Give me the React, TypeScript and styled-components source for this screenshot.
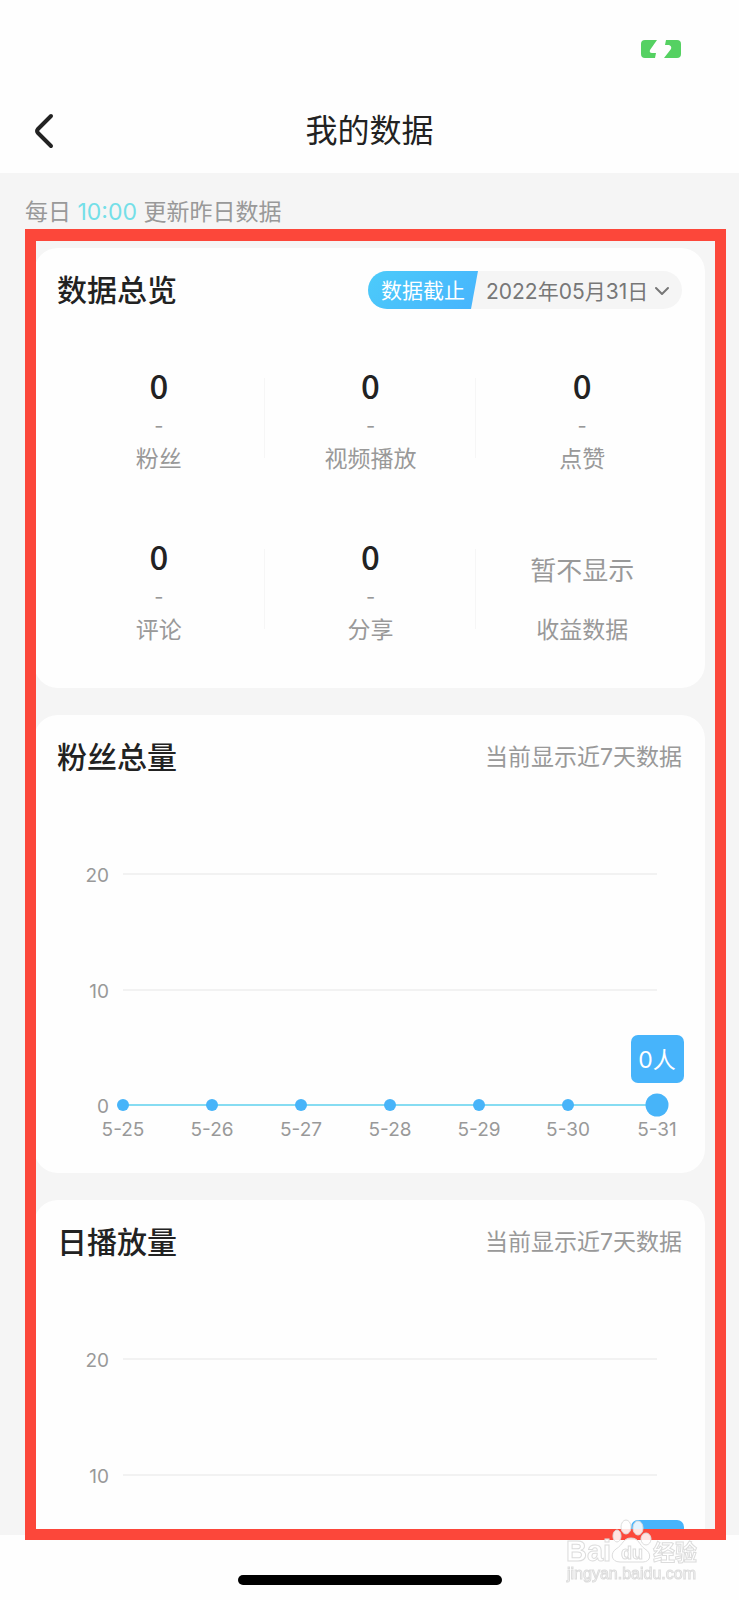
import React from "react";
import styled, { createGlobalStyle } from "styled-components";

const GlobalStyle = createGlobalStyle`
  * { box-sizing: border-box; }
  body { margin: 0; background: #fefefe; }
  body, button, select {
    font-family: Inter, "Noto Sans CJK SC", sans-serif;
  }
  h1, h2, p, dl, dd, dt { margin: 0; }
`;

const Screen = styled.div`
  position: relative;
  display: flex;
  flex-direction: column;
  height: 100vh;
  overflow: hidden;
`;

const StatusBar = styled.div`
  flex: none;
  display: flex;
  justify-content: flex-end;
  height: 88px;
  padding: 40px 58px 0 0;
`;

const NavBar = styled.header`
  flex: none;
  display: grid;
  grid-template-columns: 80px 1fr 80px;
  align-items: center;
  height: 85px;
`;

const BackButton = styled.button`
  display: flex;
  width: 80px;
  padding: 24px 0 24px 34px;
  border: 0;
  background: none;
`;

const PageTitle = styled.h1`
  font-size: 32px;
  line-height: 40px;
  font-weight: 400;
  text-align: center;
  color: #222;
`;

const Content = styled.main`
  flex: 1;
  min-height: 0;
  overflow-y: auto;
  scrollbar-width: none;
  padding: 0 34px;
  background: #f5f5f5;
`;

const Note = styled.p`
  margin: 0 -9px;
  padding: 24px 0 21px;
  font-size: 23px;
  line-height: 30px;
  color: #999;
`;

const NoteTime = styled.span`
  color: #74dfe8;
`;

const Card = styled.section`
  margin-bottom: 27px;
  border-radius: 24px;
  background: #fefefe;
`;

const CardHeader = styled.div`
  display: flex;
  align-items: center;
  justify-content: space-between;
  height: 84px;
  padding: 0 23px;
`;

const CardTitle = styled.h2`
  font-size: 30px;
  line-height: 40px;
  font-weight: 500;
  color: #222;
`;

const CardHint = styled.p`
  font-size: 23px;
  line-height: 30px;
  color: #999;
`;

const DatePill = styled.div`
  position: relative;
  display: flex;
  height: 38px;
  border-radius: 19px;
  overflow: hidden;
  background: #f5f5f5;
`;

const PillLabel = styled.label`
  padding: 0 13px;
  font-size: 21px;
  line-height: 40px;
  color: #fff;
  background: linear-gradient(135deg, #4ccbfa, #47b4fd);
  clip-path: polygon(0 0, 100% 0, calc(100% - 7px) 100%, 0 100%);
`;

const DateSelect = styled.select`
  appearance: none;
  padding: 2px 33px 0 8px;
  border: 0;
  background: none;
  font-size: 21px;
  color: #777;
`;

const PillChevron = styled.svg`
  position: absolute;
  right: 12px;
  top: 14px;
  pointer-events: none;
`;

const Metrics = styled.dl`
  display: grid;
  grid-template-columns: repeat(3, 1fr);
  padding: 0 17px 14px 19px;
`;

const Metric = styled.div<{ $divided: boolean }>`
  display: flex;
  flex-direction: column-reverse;
  justify-content: flex-end;
  height: 171px;
  padding-top: 36px;
  text-align: center;
  background: ${(p) =>
    p.$divided
      ? "linear-gradient(#f6f6f6, #f6f6f6) right 46px / 1px 80px no-repeat"
      : "none"};
`;

const MetricValue = styled.dd`
  padding-bottom: 6px;
  font-family: "Noto Sans CJK SC", sans-serif;
  font-size: 33px;
  line-height: 34px;
  font-weight: 500;
  color: #222;
`;

const MetricChange = styled.dd`
  font-size: 20px;
  line-height: 36px;
  color: #999;
`;

const MetricLabel = styled.dt`
  font-size: 23px;
  line-height: 30px;
  color: #999;
`;

const MetricHidden = styled.dd`
  padding-bottom: 12px;
  font-size: 26px;
  line-height: 64px;
  color: #999;
`;

const ChartArea = styled.div`
  padding: 0 48px 0 89px;
`;

const Plot = styled.svg`
  display: block;
  width: 100%;
  height: 374px;
  overflow: visible;
`;

const AxisText = styled.text`
  font-size: 19px;
  fill: #999;
`;

const TipText = styled.text`
  font-size: 23px;
  fill: #fff;
  text-anchor: middle;
`;

const HomeArea = styled.footer`
  flex: none;
  display: flex;
  justify-content: center;
  height: 65px;
  padding-top: 40px;
`;

const HomeIndicator = styled.div`
  width: 264px;
  height: 10px;
  border-radius: 5px;
  background: #000;
`;

const Highlight = styled.div`
  position: absolute;
  top: 229px;
  right: 13px;
  bottom: 60px;
  left: 25px;
  border: solid #fc473a;
  border-width: 12px 11px 11px;
  pointer-events: none;
`;

const Watermark = styled.svg`
  position: absolute;
  right: 37px;
  bottom: 10px;
  pointer-events: none;
  font-family: "Liberation Sans", "Noto Sans CJK SC", sans-serif;
`;

type MetricData = { label: string; value?: string };

const metrics: MetricData[] = [
  { label: "粉丝", value: "0" },
  { label: "视频播放", value: "0" },
  { label: "点赞", value: "0" },
  { label: "评论", value: "0" },
  { label: "分享", value: "0" },
  { label: "收益数据" },
];

const days = ["5-25", "5-26", "5-27", "5-28", "5-29", "5-30", "5-31"];
const ticks = [
  { label: "20", y: 75 },
  { label: "10", y: 191 },
  { label: "0", y: 306 },
];

function TrendCard({ title, tip }: { title: string; tip: string }) {
  return (
    <Card>
      <CardHeader>
        <CardTitle>{title}</CardTitle>
        <CardHint>当前显示近7天数据</CardHint>
      </CardHeader>
      <ChartArea>
        <Plot role="img" aria-label={title}>
          {ticks.map((t) => (
            <g key={t.label}>
              <AxisText x="-14" y={t.y + 8} textAnchor="end">
                {t.label}
              </AxisText>
              <line
                x1="0"
                x2="100%"
                y1={t.y}
                y2={t.y}
                stroke={t.label === "0" ? "#86dcf2" : "#f2f2f2"}
                strokeWidth="2"
              />
            </g>
          ))}
          {days.map((day, i) => {
            const x = `${(i * 100) / (days.length - 1)}%`;
            const last = i === days.length - 1;
            return (
              <g key={day}>
                <circle cx={x} cy="306" r={last ? 11.5 : 6} fill="#47b4f9" />
                <AxisText x={x} y="337" textAnchor="middle">
                  {day}
                </AxisText>
              </g>
            );
          })}
          <svg x="100%" y="236" overflow="visible">
            <rect x="-26" width="53" height="48" rx="7" fill="#47b4fb" />
            <TipText x="0" y="33">
              {tip}
            </TipText>
          </svg>
        </Plot>
      </ChartArea>
    </Card>
  );
}

export default function App() {
  return (
    <>
      <GlobalStyle />
      <Screen>
        <StatusBar>
          <svg width="41" height="18" viewBox="0 0 41 18" aria-hidden="true">
            <path
              fill="#55d162"
              d="M5 0H17L10 10Q9 13 12 13H16L15 18H5Q1 18 1 14V4Q1 0 5 0ZM26 0H37Q41 0 41 4V14Q41 18 37 18H24L31 9Q32 6 29 5H25Z"
            />
          </svg>
        </StatusBar>
        <NavBar>
          <BackButton aria-label="返回">
            <svg width="20" height="36" viewBox="0 0 20 36" fill="none">
              <path
                d="M17 3L4 16Q2 18 4 20L17 33"
                stroke="#222"
                strokeWidth="4"
                strokeLinecap="round"
              />
            </svg>
          </BackButton>
          <PageTitle>我的数据</PageTitle>
        </NavBar>
        <Content>
          <Note>
            每日 <NoteTime>10:00</NoteTime> 更新昨日数据
          </Note>
          <Card>
            <CardHeader>
              <CardTitle>数据总览</CardTitle>
              <DatePill>
                <PillLabel htmlFor="end-date">数据截止</PillLabel>
                <DateSelect id="end-date">
                  <option>2022年05月31日</option>
                </DateSelect>
                <PillChevron width="16" height="12" viewBox="0 0 16 12" fill="none">
                  <path
                    d="M2 3L8 9L14 3"
                    stroke="#777"
                    strokeWidth="2"
                    strokeLinecap="round"
                    strokeLinejoin="round"
                  />
                </PillChevron>
              </DatePill>
            </CardHeader>
            <Metrics>
              {metrics.map((m, i) => (
                <Metric key={m.label} $divided={i % 3 !== 2}>
                  <MetricLabel>{m.label}</MetricLabel>
                  {m.value === undefined ? (
                    <MetricHidden>暂不显示</MetricHidden>
                  ) : (
                    <>
                      <MetricChange>-</MetricChange>
                      <MetricValue>{m.value}</MetricValue>
                    </>
                  )}
                </Metric>
              ))}
            </Metrics>
          </Card>
          <TrendCard title="粉丝总量" tip="0人" />
          <TrendCard title="日播放量" tip="0次" />
        </Content>
        <HomeArea>
          <HomeIndicator />
        </HomeArea>
        <Highlight />
        <Watermark width="140" height="72" viewBox="0 0 140 72">
          <g fill="#fff" fillOpacity="0.85" stroke="#dcdcdc" strokeWidth="1">
            <text x="4" y="43" fontSize="29" fontWeight="700">Bai</text>
            <ellipse cx="55" cy="18" rx="4" ry="6" />
            <ellipse cx="64" cy="9" rx="5" ry="7" />
            <ellipse cx="76" cy="10" rx="5" ry="7" />
            <ellipse cx="84" cy="21" rx="5" ry="6" />
            <path d="M69 20C77 20 77 27 83 31C90 35 89 44 81 44H58C49 44 48 35 54 31C61 27 61 20 69 20Z" />
            <text x="59" y="41" fontSize="18" fontWeight="700">du</text>
            <text x="91" y="42" fontSize="22" fontWeight="700">经验</text>
            <text x="5" y="61" fontSize="16">jingyan.baidu.com</text>
          </g>
        </Watermark>
      </Screen>
    </>
  );
}
